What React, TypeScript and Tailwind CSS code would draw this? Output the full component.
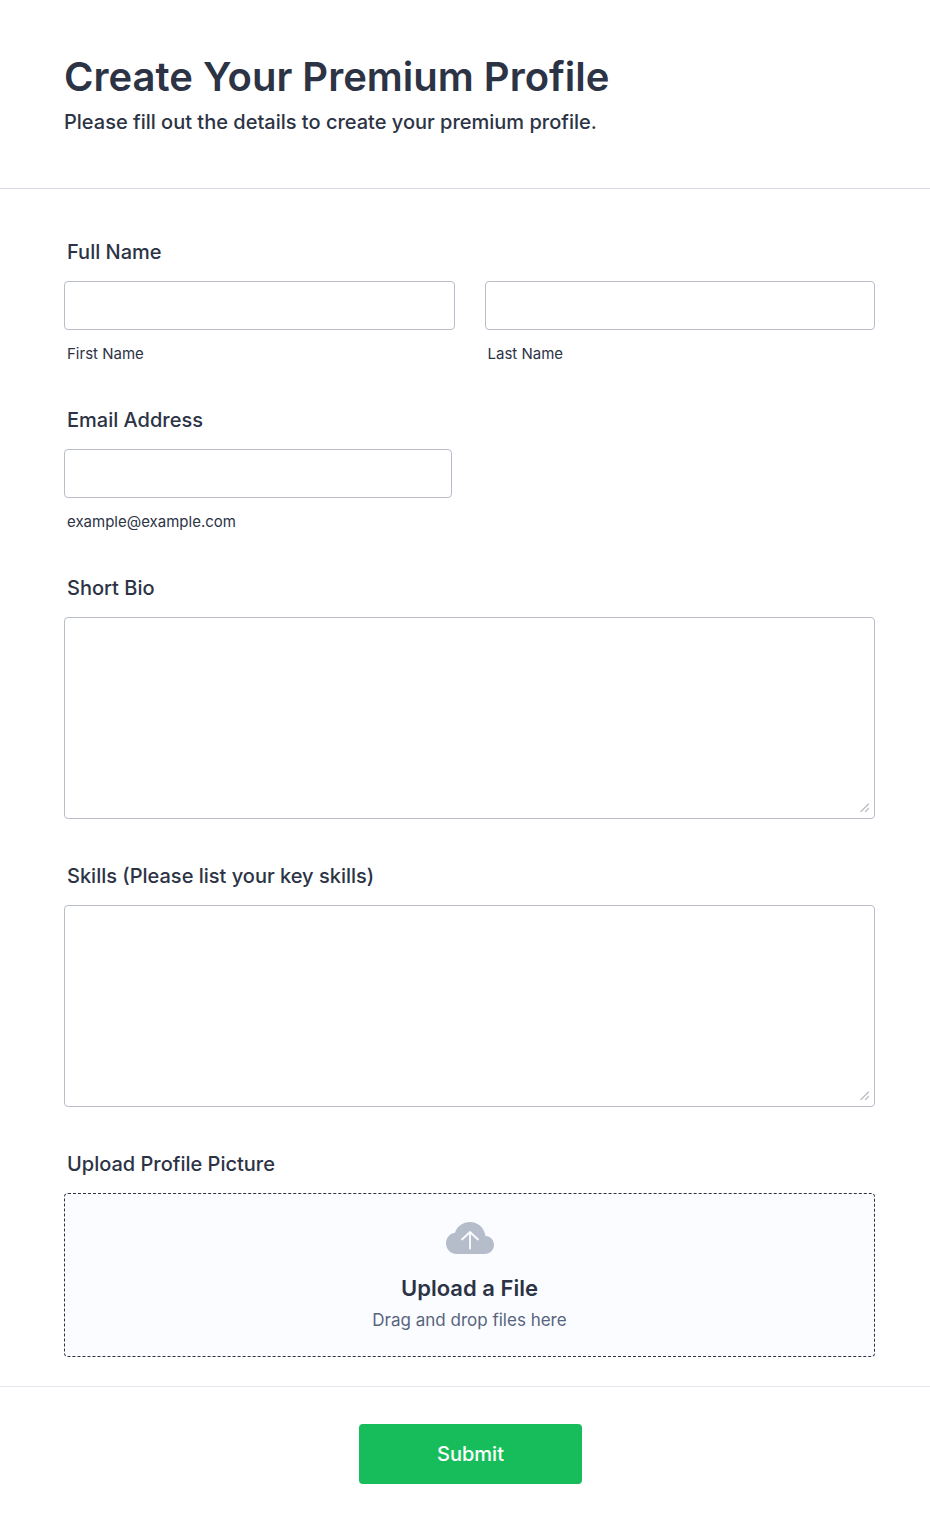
import type { ReactNode } from 'react';

const control =
  'block w-full rounded-sm border border-[#b8bdc9] bg-white px-3 text-base text-[#2c3345] outline-none focus:border-blue-500';

interface FieldProps {
  id: string;
  label: string;
  children: ReactNode;
}

/** A form line: question label above its control. */
function Field({ id, label, children }: FieldProps) {
  return (
    <div>
      <label htmlFor={id} className="mb-4 block pl-[3px] text-[20px] leading-[26px] font-medium">
        {label}
      </label>
      {children}
    </div>
  );
}

interface TextInputProps {
  id: string;
  hint: string;
  type?: string;
}

/** Single line input with the hint underneath. */
function TextInput({ id, hint, type = 'text' }: TextInputProps) {
  return (
    <div>
      <input id={id} type={type} aria-describedby={`${id}-hint`} className={`${control} h-[49px]`} />
      <label id={`${id}-hint`} htmlFor={id} className="mt-[15px] block pl-[3px] text-[15px] leading-[18px]">
        {hint}
      </label>
    </div>
  );
}

/** Multi line input with a light grip in its corner. */
function TextArea({ id }: { id: string }) {
  return (
    <div className="relative">
      <textarea id={id} className={`${control} h-[202px] resize-none py-2`} />
      <svg
        className="pointer-events-none absolute right-[5px] bottom-1.5 h-2.5 w-2.5"
        viewBox="0 0 10 10"
        fill="none"
        stroke="#b8bdc9"
        strokeWidth="1.3"
        strokeLinecap="round"
        aria-hidden="true"
      >
        <path d="M1 8.5 8.5 1M5.500 8.500 8.500 5.500" />
      </svg>
    </div>
  );
}

function CloudIcon() {
  return (
    <svg className="h-[34px] w-12" viewBox="0 0 48 34" fill="none" aria-hidden="true">
      <path
        fill="#b6bdca"
        d="M10.5 33C4.500 33 0 28.300 0 22.300c0-5.600 3.800-10 9-10.600C10.900 5.300 17 1 24 1c7.800 0 14.300 5.400 15.500 14 5 .3 8.500 4.200 8.500 9 0 5.100-4.100 9-9.300 9H10.500Z"
      />
      <path stroke="#fbfcff" strokeWidth="1.800" strokeLinecap="round" strokeLinejoin="round" d="M24 27.500V11M16 18.500 24 11 32 18.500" />
    </svg>
  );
}

export default function App() {
  return (
    <form
      className="bg-white font-['Inter',sans-serif] text-[#2c3345]"
      onSubmit={(e) => e.preventDefault()}
    >
      {/* Header */}
      <header className="border-b border-[#d7d8e1] px-16 pt-[53px] pb-[53px]">
        <h1 className="text-[40px] leading-12 font-semibold">Create Your Premium Profile</h1>
        <p className="mt-2 text-[20px] leading-[26px] font-medium">
          Please fill out the details to create your premium profile.
        </p>
      </header>

      {/* Questions */}
      <div className="flex flex-col gap-11 pt-[50px] pr-[55px] pb-[29px] pl-16">
        <Field id="first-name" label="Full Name">
          <div className="grid grid-cols-2 gap-[30px]">
            <TextInput id="first-name" hint="First Name" />
            <TextInput id="last-name" hint="Last Name" />
          </div>
        </Field>

        <Field id="email" label="Email Address">
          <div className="max-w-[388px]">
            <TextInput id="email" type="email" hint="example@example.com" />
          </div>
        </Field>

        <Field id="bio" label="Short Bio">
          <TextArea id="bio" />
        </Field>

        <Field id="skills" label="Skills (Please list your key skills)">
          <TextArea id="skills" />
        </Field>

        <Field id="picture" label="Upload Profile Picture">
          <label
            htmlFor="picture"
            className="flex cursor-pointer flex-col items-center rounded-sm border border-dashed border-[#2c3345] bg-[#fbfcff] pt-[27px] pb-6"
          >
            <CloudIcon />
            <span className="mt-[19px] text-[22px] leading-7 font-semibold">Upload a File</span>
            <span className="mt-1.5 text-[17px] leading-6 text-[#57647e]">Drag and drop files here</span>
          </label>
          <input id="picture" type="file" className="sr-only" />
        </Field>
      </div>

      {/* Footer */}
      <footer className="flex justify-center border-t border-[#e3e8ef] pt-[37px] pr-[53px] pb-[50px] pl-16">
        <button
          type="submit"
          className="h-[60px] w-[223px] cursor-pointer rounded-sm bg-[#18bd5b] text-[20px] font-medium text-white hover:bg-[#16aa52]"
        >
          Submit
        </button>
      </footer>
    </form>
  );
}
